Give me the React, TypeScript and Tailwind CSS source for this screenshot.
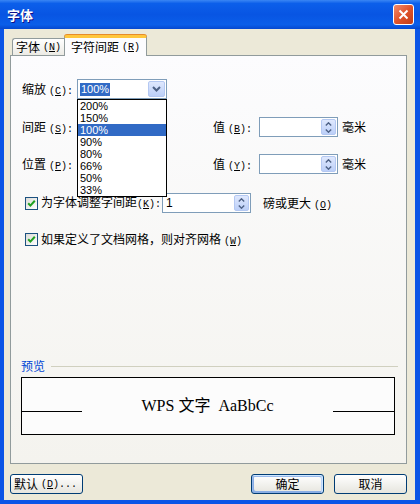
import React from 'react'

const cjk = "font-['Noto_Sans_CJK_SC',sans-serif]"
const sans = "font-['Liberation_Sans','Noto_Sans_CJK_SC',sans-serif]"

const scales = ['200%', '150%', '100%', '90%', '80%', '66%', '50%', '33%']

function Mn({ k, colon, dots, tight }: { k: string; colon?: boolean; dots?: boolean; tight?: boolean }) {
  return (
    <span className={`font-['Liberation_Mono',monospace] text-[10px] ${tight ? 'ml-0' : 'ml-[3px]'}`}>
      (<span className="underline">{k}</span>){colon ? ':' : ''}
      {dots ? '...' : ''}
    </span>
  )
}

function Chevron() {
  return (
    <svg width="9" height="6" viewBox="0 0 9 6">
      <polyline points="1,1 4.5,4.5 8,1" fill="none" stroke="#4d6185" strokeWidth="2" />
    </svg>
  )
}

function SpinArrows() {
  return (
    <div className="w-[15px] h-[16px] mr-px rounded-[2px] border border-[#b4c8f2] bg-gradient-to-b from-[#dfe8fd] to-[#bccff8] flex flex-col items-center justify-center gap-[3px]">
      <svg width="7" height="4" viewBox="0 0 7 4">
        <polyline points="0.8,3.5 3.5,0.8 6.2,3.5" fill="none" stroke="#4d6185" strokeWidth="1.4" />
      </svg>
      <svg width="7" height="4" viewBox="0 0 7 4">
        <polyline points="0.8,0.5 3.5,3.2 6.2,0.5" fill="none" stroke="#4d6185" strokeWidth="1.4" />
      </svg>
    </div>
  )
}

function Spin({ className, value }: { className: string; value?: string }) {
  return (
    <div className={`${className} shrink-0 h-[20px] border border-[#7f9db9] bg-white flex items-center`}>
      <span className={`flex-1 pl-[3px] text-[12px] ${sans}`}>{value}</span>
      <SpinArrows />
    </div>
  )
}

function Combo({ children }: { children?: React.ReactNode }) {
  return (
    <div className="relative w-[90px] h-[20px] border border-[#7f9db9] bg-white flex items-center">
      <div className="flex-1 pl-[2px] flex items-center">{children}</div>
      <div className="w-[17px] h-[16px] mr-px rounded-[2px] border border-[#b4c8f2] bg-gradient-to-b from-[#dfe8fd] to-[#bccff8] flex items-center justify-center">
        <Chevron />
      </div>
    </div>
  )
}

function Check() {
  return (
    <div className="w-[13px] h-[13px] shrink-0 border border-[#1c5180] bg-gradient-to-br from-[#dcdcd7] to-white flex items-center justify-center">
      <svg width="9" height="9" viewBox="0 0 9 9">
        <polyline points="1.2,4.2 3.4,6.6 7.8,1.8" fill="none" stroke="#21a121" strokeWidth="2" />
      </svg>
    </div>
  )
}

function Button({ children, primary, left }: { children: React.ReactNode; primary?: boolean; left?: boolean }) {
  return (
    <div
      className={`w-[73px] h-[20px] rounded-[3px] border border-[#003c74] bg-gradient-to-b from-white to-[#e6e5de] flex items-center text-[12px] ${cjk} ${
        left ? 'pl-[3px]' : 'justify-center'
      } ${primary ? 'shadow-[inset_-1px_1px_#cee7ff,inset_1px_2px_#98b8ea,inset_-2px_2px_#bcd4f6,inset_1px_-1px_#89ade4,inset_2px_-2px_#89ade4]' : ''}`}
    >
      {children}
    </div>
  )
}

export default function App() {
  return (
    <div className="w-[420px] h-[504px] flex flex-col bg-[#0b55e6] overflow-hidden">
      <div className="h-[29px] shrink-0 flex items-center pl-[7px] pr-[6px] bg-[linear-gradient(180deg,#3a86f4_0%,#0c5fea_12%,#0855e3_50%,#0a5ee9_85%,#0548cf_100%)]">
        <span className={`text-[13px] font-bold text-white ${cjk} [text-shadow:1px_1px_#0f1089]`}>字体</span>
        <div className="ml-auto w-[21px] h-[21px] rounded-[3px] border border-white bg-gradient-to-br from-[#f08a6c] via-[#e0532a] to-[#c23d17] flex items-center justify-center">
          <svg width="11" height="11" viewBox="0 0 11 11">
            <path d="M1.5 1.5 L9.5 9.5 M9.5 1.5 L1.5 9.5" stroke="white" strokeWidth="2" />
          </svg>
        </div>
      </div>

      <div className="flex-1 ml-[4px] mr-[5px] mb-[4px] bg-[#ece9d8] flex flex-col pl-[6px] pr-[8px] pt-[6px] pb-[6px]">
        <div className="h-[20px] flex items-end pl-[2px]">
          <div className={`w-[52px] h-[17px] border-t border-l border-[#919b9c] rounded-tl-[3px] bg-gradient-to-b from-white to-[#ecebe5] flex items-center justify-center text-[12px] ${cjk}`}>
            字体<Mn k="N" />
          </div>
          <div className={`relative z-10 -mb-px w-[83px] h-[21px] border-x border-[#919b9c] border-t-[3px] border-t-[#ffc73c] rounded-t-[3px] shadow-[0_-1px_#e68b2c] bg-[#fcfcfe] flex items-center justify-center text-[12px] ${cjk}`}>
            字符间距<Mn k="R" />
          </div>
        </div>

        <div className={`relative flex-1 border border-[#919b9c] bg-gradient-to-b from-[#fcfcfe] to-[#f4f3ee] flex flex-col pt-[23px] pb-[28px] text-[12px] text-black ${cjk}`}>
          <div className="h-[20px] flex items-center pl-[11px]">
            <span className="w-[55px]">
              缩放<Mn k="C" colon />
            </span>
            <div className="relative">
              <Combo>
                <span className={`px-px leading-[13px] text-[11px] bg-[#316ac5] text-white ${sans}`}>100%</span>
              </Combo>
              <div className={`absolute left-0 top-full z-20 w-[90px] border border-black bg-white text-[11px] ${sans}`}>
                {scales.map((s) => (
                  <div key={s} className={`h-[12px] leading-[12px] pl-[2px] ${s === '100%' ? 'bg-[#316ac5] text-white' : ''}`}>
                    {s}
                  </div>
                ))}
              </div>
            </div>
          </div>

          <div className="h-[20px] mt-[18px] flex items-center pl-[11px]">
            <span className="w-[55px]">
              间距<Mn k="S" colon />
            </span>
            <Combo />
            <span className="ml-[46px] w-[46px]">
              值<Mn k="B" colon />
            </span>
            <Spin className="w-[79px]" />
            <span className="ml-[4px]">毫米</span>
          </div>

          <div className="h-[20px] mt-[17px] flex items-center pl-[11px]">
            <span className="w-[55px]">
              位置<Mn k="P" colon />
            </span>
            <Combo />
            <span className="ml-[46px] w-[46px]">
              值<Mn k="Y" colon />
            </span>
            <Spin className="w-[79px]" />
            <span className="ml-[4px]">毫米</span>
          </div>

          <div className="h-[20px] mt-[19px] flex items-center pl-[14px]">
            <Check />
            <span className="ml-[3px] w-[121px] shrink-0 whitespace-nowrap leading-[12px]">
              为字体调整字间距<Mn k="K" colon tight />
            </span>
            <Spin className="w-[89px]" value="1" />
            <span className="ml-[12px] whitespace-nowrap">
              磅或更大<Mn k="O" />
            </span>
          </div>

          <div className="h-[20px] mt-[16px] flex items-center pl-[14px]">
            <Check />
            <span className="ml-[3px] whitespace-nowrap">
              如果定义了文档网格，则对齐网格<Mn k="W" />
            </span>
          </div>

          <div className="mt-auto h-[14px] flex items-center pl-[10px] pr-[8px]">
            <span className="text-[#0046d5]">预览</span>
            <div className="flex-1 h-px ml-[6px] bg-[#d0d0bf]" />
          </div>
          <div className="mt-[4px] ml-[10px] mr-[11px] h-[58px] border border-black bg-[#fcfcfc] flex items-center">
            <div className="w-[60px] h-px bg-black mt-[10px]" />
            <div className="flex-1 text-center text-[16px] whitespace-pre font-['Liberation_Serif','Noto_Sans_CJK_SC',serif]">
              WPS 文字  AaBbCc
            </div>
            <div className="w-[61px] h-px bg-black mt-[10px]" />
          </div>
        </div>

        <div className="mt-[10px] h-[20px] flex items-center">
          <Button left>
            默认<Mn k="D" dots />
          </Button>
          <div className="ml-auto">
            <Button primary>确定</Button>
          </div>
          <div className="ml-[10px]">
            <Button>取消</Button>
          </div>
        </div>
      </div>
    </div>
  )
}
